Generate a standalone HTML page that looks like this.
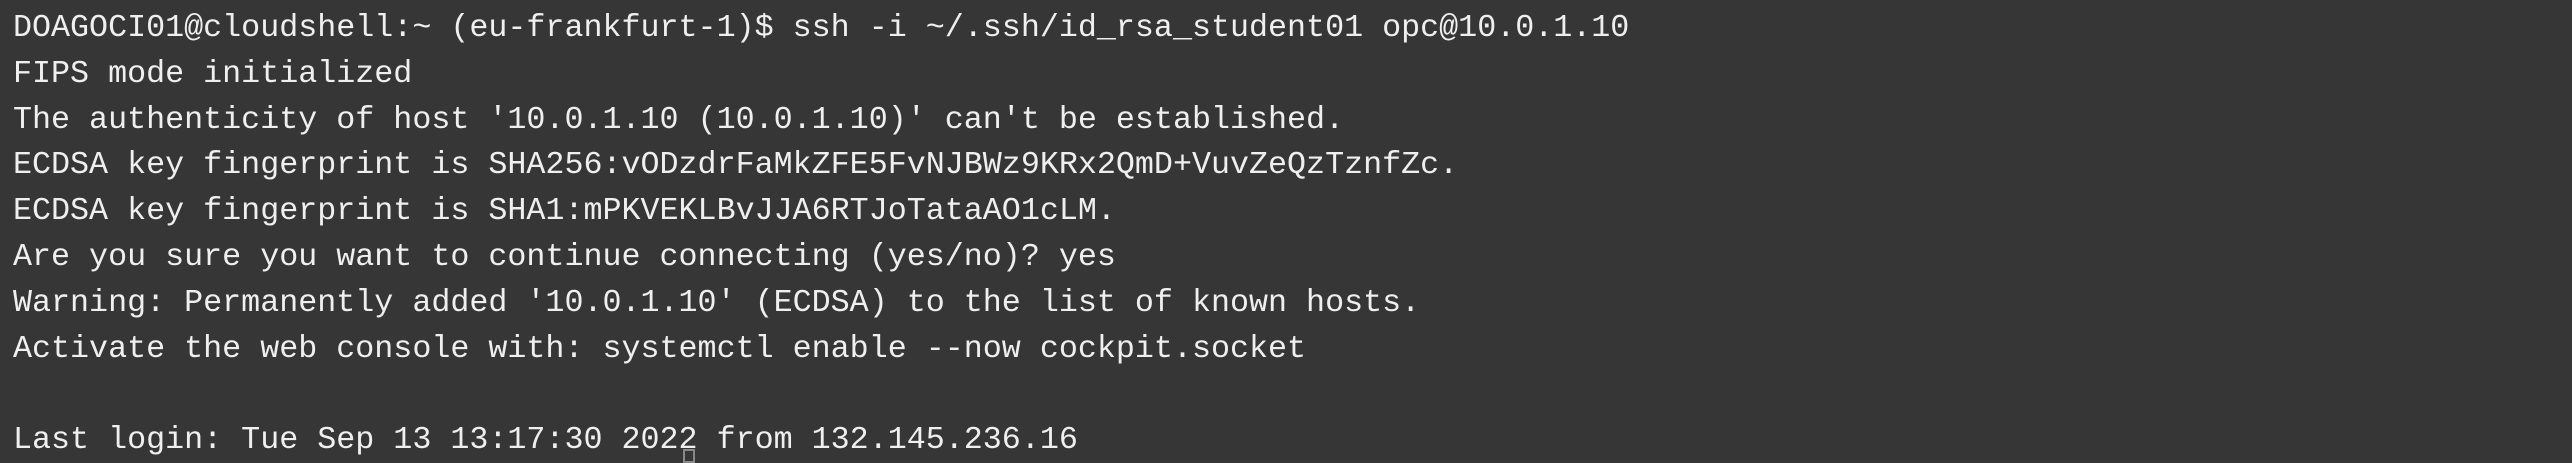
<!DOCTYPE html>
<html><head><meta charset="utf-8"><style>
html,body{margin:0;padding:0;background:#363636;width:2572px;height:458px;overflow:hidden}
pre{margin:0;padding:6px 0 0 13px;font-family:"Liberation Mono",monospace;font-size:31.7px;line-height:45.8px;color:#efefef;white-space:pre}
.cur{position:absolute;left:683px;top:449px;width:12px;height:14px;border:2px solid #888;box-sizing:border-box}
</style></head><body>
<pre>DOAGOCI01@cloudshell:~ (eu-frankfurt-1)$ ssh -i ~/.ssh/id_rsa_student01 opc@10.0.1.10
FIPS mode initialized
The authenticity of host '10.0.1.10 (10.0.1.10)' can't be established.
ECDSA key fingerprint is SHA256:vODzdrFaMkZFE5FvNJBWz9KRx2QmD+VuvZeQzTznfZc.
ECDSA key fingerprint is SHA1:mPKVEKLBvJJA6RTJoTataAO1cLM.
Are you sure you want to continue connecting (yes/no)? yes
Warning: Permanently added '10.0.1.10' (ECDSA) to the list of known hosts.
Activate the web console with: systemctl enable --now cockpit.socket

Last login: Tue Sep 13 13:17:30 2022 from 132.145.236.16</pre>
<div class="cur"></div>
</body></html>
